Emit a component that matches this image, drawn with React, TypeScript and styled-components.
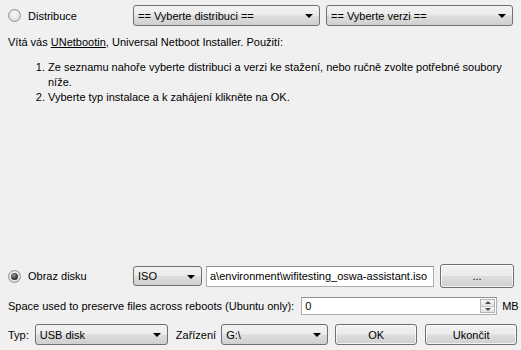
import styled, { createGlobalStyle } from 'styled-components';

const GlobalStyle = createGlobalStyle`
  * { box-sizing: border-box; }
  body {
    margin: 0;
    background: #f0f0f0;
  }
`;

const Window = styled.div`
  width: 521px;
  height: 350px;
  padding: 5px 9px 5px 8px;
  display: flex;
  flex-direction: column;
  background: #f0f0f0;
  color: #000;
  font-family: 'Liberation Sans', Arial, sans-serif;
  font-size: 11px;
  overflow: hidden;
`;

const Row = styled.div<{ $h: number; $mb?: number }>`
  display: flex;
  align-items: center;
  height: ${({ $h }) => $h}px;
  margin-bottom: ${({ $mb }) => $mb ?? 0}px;
  flex-shrink: 0;
`;

const RadioLabel = styled.label`
  width: 125px;
  display: flex;
  align-items: center;
  gap: 7px;
  flex-shrink: 0;
`;

const RadioCircle = styled.span<{ $checked?: boolean }>`
  width: 13px;
  height: 13px;
  border-radius: 50%;
  border: 1px solid #8f8f8f;
  background: radial-gradient(circle at 50% 40%, #fbfbfb 0%, #e4e4e4 55%, #cfcfcf 100%);
  display: flex;
  align-items: center;
  justify-content: center;

  &::after {
    content: '';
    display: ${({ $checked }) => ($checked ? 'block' : 'none')};
    width: 7px;
    height: 7px;
    border-radius: 50%;
    background: radial-gradient(circle at 40% 35%, #9a9a9a 0%, #3c3c3c 55%, #1a1a1a 100%);
  }
`;

const Combo = styled.div<{ $w: number; $h?: number }>`
  width: ${({ $w }) => $w}px;
  height: ${({ $h }) => $h ?? 21}px;
  flex-shrink: 0;
  border: 1px solid #707070;
  border-radius: 3px;
  background: linear-gradient(#f3f3f3 0%, #ebebeb 48%, #dddddd 52%, #d0d0d0 100%);
  display: flex;
  align-items: center;
  padding: 0 6px 0 4px;
  white-space: nowrap;
  overflow: hidden;
`;

const ComboText = styled.span`
  flex: 1;
  overflow: hidden;
`;

const Arrow = styled.span`
  width: 0;
  height: 0;
  border-left: 4px solid transparent;
  border-right: 4px solid transparent;
  border-top: 4px solid #000;
  margin-top: 1px;
`;

const Intro = styled.div`
  margin-top: 9px;
  line-height: 14px;
`;

const Link = styled.span`
  text-decoration: underline;
`;

const Steps = styled.ol`
  margin: 11px 0 0;
  padding-left: 40px;
  line-height: 15px;
  width: 496px;
`;

const Spacer = styled.div`
  flex: 1;
`;

const TextBox = styled.div<{ $w: number; $h?: number }>`
  width: ${({ $w }) => $w}px;
  height: ${({ $h }) => $h ?? 21}px;
  flex-shrink: 0;
  background: #fff;
  border: 1px solid #abadb3;
  border-top-color: #8e8f8f;
  display: flex;
  align-items: center;
  padding-left: 3px;
  white-space: nowrap;
  overflow: hidden;
`;

const Button = styled.div<{ $w: number; $h?: number }>`
  width: ${({ $w }) => $w}px;
  height: ${({ $h }) => $h ?? 21}px;
  flex-shrink: 0;
  border: 1px solid #707070;
  border-radius: 3px;
  background: linear-gradient(#f2f2f2 0%, #ebebeb 48%, #dddddd 52%, #cfcfcf 100%);
  box-shadow: inset 0 0 0 1px rgba(255, 255, 255, 0.7);
  display: flex;
  align-items: center;
  justify-content: center;
`;

const Label = styled.span<{ $ml?: number; $mr?: number }>`
  margin-left: ${({ $ml }) => $ml ?? 0}px;
  margin-right: ${({ $mr }) => $mr ?? 0}px;
  flex-shrink: 0;
  white-space: nowrap;
`;

const Gap = styled.span<{ $w: number }>`
  width: ${({ $w }) => $w}px;
  flex-shrink: 0;
`;

const SpinBox = styled(TextBox)`
  padding-right: 1px;
`;

const SpinButtons = styled.div`
  margin-left: auto;
  width: 15px;
  height: 14px;
  display: flex;
  flex-direction: column;
  border: 1px solid #b4b4b4;
`;

const SpinHalf = styled.div<{ $up?: boolean }>`
  flex: 1;
  background: linear-gradient(#f7f7f7, #e2e2e2);
  display: flex;
  align-items: center;
  justify-content: center;
  ${({ $up }) => ($up ? 'border-bottom: 1px solid #c8c8c8;' : '')}

  &::after {
    content: '';
    width: 0;
    height: 0;
    border-left: 3px solid transparent;
    border-right: 3px solid transparent;
    ${({ $up }) => ($up ? 'border-bottom: 3px solid #4d4d4d;' : 'border-top: 3px solid #4d4d4d;')}
  }
`;

export default function App() {
  return (
    <>
      <GlobalStyle />
      <Window>
        <Row $h={21}>
          <RadioLabel>
            <RadioCircle />
            Distribuce
          </RadioLabel>
          <Combo $w={187}>
            <ComboText>== Vyberte distribuci ==</ComboText>
            <Arrow />
          </Combo>
          <Gap $w={6} />
          <Combo $w={187}>
            <ComboText>== Vyberte verzi ==</ComboText>
            <Arrow />
          </Combo>
        </Row>

        <Intro>
          Vítá vás <Link>UNetbootin</Link>, Universal Netboot Installer. Použití:
        </Intro>
        <Steps>
          <li>Ze seznamu nahoře vyberte distribuci a verzi ke stažení, nebo ručně zvolte potřebné soubory níže.</li>
          <li>Vyberte typ instalace a k zahájení klikněte na OK.</li>
        </Steps>

        <Spacer />

        <Row $h={24} $mb={9}>
          <RadioLabel>
            <RadioCircle $checked />
            Obraz disku
          </RadioLabel>
          <Combo $w={69} $h={20}>
            <ComboText>ISO</ComboText>
            <Arrow />
          </Combo>
          <Gap $w={4} />
          <TextBox $w={228}>a\environment\wifitesting_oswa-assistant.iso</TextBox>
          <Gap $w={6} />
          <Button $w={74} $h={24}>...</Button>
        </Row>

        <Row $h={18} $mb={9}>
          <Label $mr={7}>Space used to preserve files across reboots (Ubuntu only):</Label>
          <SpinBox $w={196} $h={18}>
            0
            <SpinButtons>
              <SpinHalf $up />
              <SpinHalf />
            </SpinButtons>
          </SpinBox>
          <Label $ml={5}>MB</Label>
        </Row>

        <Row $h={21}>
          <Label $mr={6}>Typ:</Label>
          <Combo $w={133}>
            <ComboText>USB disk</ComboText>
            <Arrow />
          </Combo>
          <Label $ml={8} $mr={5}>Zařízení</Label>
          <Combo $w={107}>
            <ComboText>G:\</ComboText>
            <Arrow />
          </Combo>
          <Gap $w={7} />
          <Button $w={82}>OK</Button>
          <Gap $w={8} />
          <Button $w={92}>Ukončit</Button>
        </Row>
      </Window>
    </>
  );
}
